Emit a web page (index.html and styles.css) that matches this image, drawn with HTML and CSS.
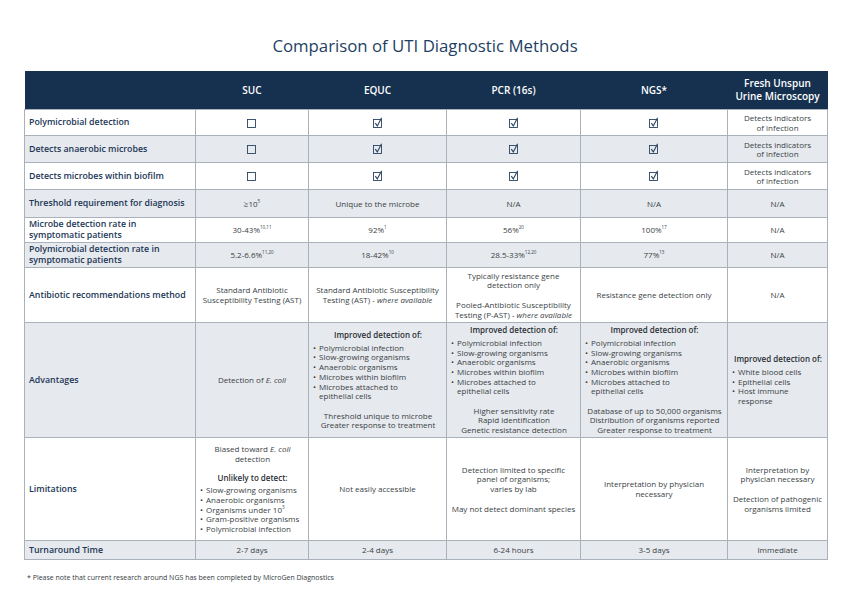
FILE: index.html
```html
<!DOCTYPE html>
<html lang="en">
<head>
<meta charset="utf-8">
<title>Comparison of UTI Diagnostic Methods</title>
<link rel="stylesheet" href="styles.css">
</head>
<body>
<div class="page">
  <h1 class="title">Comparison of UTI Diagnostic Methods</h1>
  <table class="cmp">
    <colgroup>
      <col class="c-label"><col class="c-suc"><col class="c-equc"><col class="c-pcr"><col class="c-ngs"><col class="c-fresh">
    </colgroup>
    <thead>
      <tr class="r-head">
        <th></th><th>SUC</th><th>EQUC</th><th>PCR (16s)</th><th>NGS*</th><th>Fresh Unspun<br>Urine Microscopy</th>
      </tr>
    </thead>
    <tbody>
      <tr class="r1 white">
        <td class="lbl">Polymicrobial detection</td>
        <td><svg class="box" viewBox="0 0 12 12"><rect x="1.5" y="2.5" width="8" height="8"/></svg></td>
        <td><svg class="box" viewBox="0 0 12 12"><rect x="1.5" y="2.5" width="8" height="8"/><path class="tick" d="M3.3 6.2 L5.3 8.9 L9.6 0.8"/></svg></td>
        <td><svg class="box" viewBox="0 0 12 12"><rect x="1.5" y="2.5" width="8" height="8"/><path class="tick" d="M3.3 6.2 L5.3 8.9 L9.6 0.8"/></svg></td>
        <td><svg class="box" viewBox="0 0 12 12"><rect x="1.5" y="2.5" width="8" height="8"/><path class="tick" d="M3.3 6.2 L5.3 8.9 L9.6 0.8"/></svg></td>
        <td class="tight">Detects indicators<br>of infection</td>
      </tr>
      <tr class="r2 grey">
        <td class="lbl">Detects anaerobic microbes</td>
        <td><svg class="box" viewBox="0 0 12 12"><rect x="1.5" y="2.5" width="8" height="8"/></svg></td>
        <td><svg class="box" viewBox="0 0 12 12"><rect x="1.5" y="2.5" width="8" height="8"/><path class="tick" d="M3.3 6.2 L5.3 8.9 L9.6 0.8"/></svg></td>
        <td><svg class="box" viewBox="0 0 12 12"><rect x="1.5" y="2.5" width="8" height="8"/><path class="tick" d="M3.3 6.2 L5.3 8.9 L9.6 0.8"/></svg></td>
        <td><svg class="box" viewBox="0 0 12 12"><rect x="1.5" y="2.5" width="8" height="8"/><path class="tick" d="M3.3 6.2 L5.3 8.9 L9.6 0.8"/></svg></td>
        <td class="tight">Detects indicators<br>of infection</td>
      </tr>
      <tr class="r3 white">
        <td class="lbl">Detects microbes within biofilm</td>
        <td><svg class="box" viewBox="0 0 12 12"><rect x="1.5" y="2.5" width="8" height="8"/></svg></td>
        <td><svg class="box" viewBox="0 0 12 12"><rect x="1.5" y="2.5" width="8" height="8"/><path class="tick" d="M3.3 6.2 L5.3 8.9 L9.6 0.8"/></svg></td>
        <td><svg class="box" viewBox="0 0 12 12"><rect x="1.5" y="2.5" width="8" height="8"/><path class="tick" d="M3.3 6.2 L5.3 8.9 L9.6 0.8"/></svg></td>
        <td><svg class="box" viewBox="0 0 12 12"><rect x="1.5" y="2.5" width="8" height="8"/><path class="tick" d="M3.3 6.2 L5.3 8.9 L9.6 0.8"/></svg></td>
        <td class="tight">Detects indicators<br>of infection</td>
      </tr>
      <tr class="r4 grey">
        <td class="lbl">Threshold requirement for diagnosis</td>
        <td>≥10<sup>5</sup></td>
        <td>Unique to the microbe</td>
        <td>N/A</td>
        <td>N/A</td>
        <td>N/A</td>
      </tr>
      <tr class="r5 white">
        <td class="lbl two">Microbe detection rate in<br>symptomatic patients</td>
        <td>30-43%<sup>10,11</sup></td>
        <td>92%<sup>1</sup></td>
        <td>56%<sup>20</sup></td>
        <td>100%<sup>17</sup></td>
        <td>N/A</td>
      </tr>
      <tr class="r6 grey">
        <td class="lbl two">Polymicrobial detection rate in<br>symptomatic patients</td>
        <td>5.2-6.6%<sup>11,20</sup></td>
        <td>18-42%<sup>10</sup></td>
        <td>28.5-33%<sup>12,20</sup></td>
        <td>77%<sup>13</sup></td>
        <td>N/A</td>
      </tr>
      <tr class="r-ab white">
        <td class="lbl">Antibiotic recommendations method</td>
        <td>Standard Antibiotic<br>Susceptibility Testing (AST)</td>
        <td>Standard Antibiotic Susceptibility<br>Testing (AST) - <em>where available</em></td>
        <td>Typically resistance gene<br>detection only<br><span class="gap"></span>Pooled-Antibiotic Susceptibility<br>Testing (P-AST) - <em>where available</em></td>
        <td>Resistance gene detection only</td>
        <td>N/A</td>
      </tr>
      <tr class="r-adv grey">
        <td class="lbl">Advantages</td>
        <td>Detection of <em>E. coli</em></td>
        <td class="blk">
          <div class="hd">Improved detection of:</div>
          <ul class="bl">
            <li>Polymicrobial infection</li>
            <li>Slow-growing organisms</li>
            <li>Anaerobic organisms</li>
            <li>Microbes within biofilm</li>
            <li>Microbes attached to<br>epithelial cells</li>
          </ul>
          <div class="foot">Threshold unique to microbe<br>Greater response to treatment</div>
        </td>
        <td class="blk">
          <div class="hd">Improved detection of:</div>
          <ul class="bl">
            <li>Polymicrobial infection</li>
            <li>Slow-growing organisms</li>
            <li>Anaerobic organisms</li>
            <li>Microbes within biofilm</li>
            <li>Microbes attached to<br>epithelial cells</li>
          </ul>
          <div class="foot">Higher sensitivity rate<br>Rapid identification<br>Genetic resistance detection</div>
        </td>
        <td class="blk">
          <div class="hd">Improved detection of:</div>
          <ul class="bl">
            <li>Polymicrobial infection</li>
            <li>Slow-growing organisms</li>
            <li>Anaerobic organisms</li>
            <li>Microbes within biofilm</li>
            <li>Microbes attached to<br>epithelial cells</li>
          </ul>
          <div class="foot">Database of up to 50,000 organisms<br>Distribution of organisms reported<br>Greater response to treatment</div>
        </td>
        <td class="blk">
          <div class="hd">Improved detection of:</div>
          <ul class="bl">
            <li>White blood cells</li>
            <li>Epithelial cells</li>
            <li>Host immune<br>response</li>
          </ul>
        </td>
      </tr>
      <tr class="r-lim white">
        <td class="lbl">Limitations</td>
        <td class="blk">
          <div class="ctr">Biased toward <em>E. coli</em><br>detection</div>
          <div class="hd sp">Unlikely to detect:</div>
          <ul class="bl">
            <li>Slow-growing organisms</li>
            <li>Anaerobic organisms</li>
            <li>Organisms under 10<sup>3</sup></li>
            <li>Gram-positive organisms</li>
            <li>Polymicrobial infection</li>
          </ul>
        </td>
        <td>Not easily accessible</td>
        <td>Detection limited to specific<br>panel of organisms;<br>varies by lab<br><span class="gap"></span>May not detect dominant species</td>
        <td>Interpretation by physician<br>necessary</td>
        <td>Interpretation by<br>physician necessary<br><span class="gap"></span>Detection of pathogenic<br>organisms limited</td>
      </tr>
      <tr class="r-t grey">
        <td class="lbl">Turnaround Time</td>
        <td>2-7 days</td>
        <td>2-4 days</td>
        <td>6-24 hours</td>
        <td>3-5 days</td>
        <td>Immediate</td>
      </tr>
    </tbody>
  </table>
  <p class="note">* Please note that current research around NGS has been completed by MicroGen Diagnostics</p>
</div>
</body>
</html>
```

FILE: styles.css
```css
html, body {
  margin: 0;
  padding: 0;
  background: #ffffff;
}
body {
  font-family: "Open Sans", "Noto Sans", "Liberation Sans", sans-serif;
  color: #333a40;
}
.page {
  width: 850px;
  padding: 35px 0 0 24px;
  box-sizing: border-box;
}
.title {
  margin: 0 0 14px 0;
  width: 802px;
  text-align: center;
  font-size: 16.8px;
  font-weight: 400;
  line-height: 22px;
  color: #1d3f63;
}
.cmp {
  width: 803px;
  table-layout: fixed;
  border-collapse: collapse;
  font-size: 8px;
  line-height: 9.7px;
}
.c-label { width: 171px; }
.c-suc { width: 113px; }
.c-equc { width: 138px; }
.c-pcr { width: 134px; }
.c-ngs { width: 147px; }
.c-fresh { width: 100px; }

.cmp th {
  background: #15314f;
  color: #ffffff;
  font-weight: 600;
  font-size: 10px;
  line-height: 12.7px;
  padding: 0;
  vertical-align: middle;
  text-align: center;
}
.r-head th { height: 38px; }
.cmp td {
  border: 1px solid #a9b1ba;
  text-align: center;
  vertical-align: middle;
  padding: 0 3px;
  color: #3a3f45;
}
.white td { background: #ffffff; }
.grey td { background: #e6e9ed; }
.r1 td { height: 25px; }
.r2 td { height: 26px; }
.r3 td { height: 26px; }
.r4 td { height: 27px; }
.r5 td { height: 24px; }
.r6 td { height: 24px; }
.r-ab td { height: 54px; }
.r-adv td { height: 114px; }
.r-lim td { height: 102px; }
.r-t td { height: 18px; }

.cmp td.lbl {
  text-align: left;
  padding-left: 4px;
  padding-right: 0;
  font-weight: 600;
  font-size: 8.8px;
  line-height: 11px;
  white-space: nowrap;
  color: #1b3656;
}
.cmp td.tight { line-height: 9.5px; }
sup {
  font-size: 4.5px;
  line-height: 0;
  vertical-align: 4px;
}
.box {
  width: 12px;
  height: 12px;
  display: block;
  margin: 0 auto;
}
.box rect {
  fill: none;
  stroke: #2b4460;
  stroke-width: 0.9;
}
.box .tick {
  fill: none;
  stroke: #2b4460;
  stroke-width: 1.1;
  stroke-linejoin: miter;
}
.gap {
  display: block;
  height: 9.7px;
}
.cmp td.blk {
  text-align: left;
  padding: 0 3px 0 4px;
}
.hd {
  text-align: center;
  font-weight: 600;
  color: #2a2f35;
  margin-bottom: 3px;
}
.hd.sp { margin-top: 9px; }
.bl {
  list-style: none;
  margin: 0;
  padding: 0;
  text-align: left;
}
.bl li {
  padding-left: 6px;
  text-indent: -6px;
}
.bl li::before {
  content: "•";
  display: inline-block;
  width: 6px;
  text-indent: 0;
}
.foot {
  text-align: center;
  margin-top: 9.7px;
}
.ctr { text-align: center; }
.note {
  margin: 13px 0 0 3px;
  font-size: 7px;
  color: #333a40;
}
```
